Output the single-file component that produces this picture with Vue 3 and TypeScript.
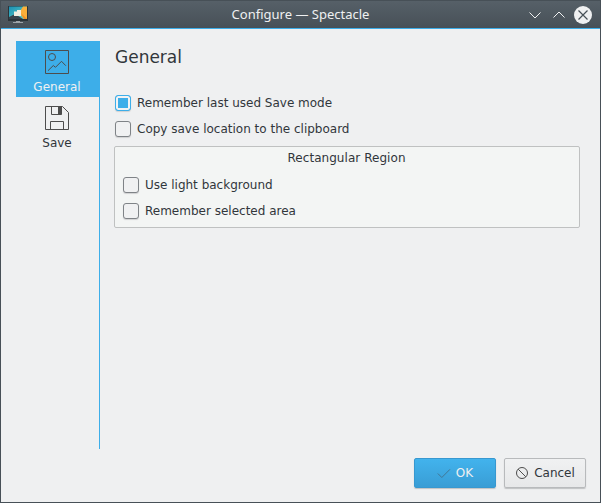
<script setup lang="ts">
import { ref } from 'vue'

interface Option {
  label: string
  checked: boolean
}

const page = ref('General')
const saving = ref<Option[]>([
  { label: 'Remember last used Save mode', checked: true },
  { label: 'Copy save location to the clipboard', checked: false },
])
const region = ref<Option[]>([
  { label: 'Use light background', checked: false },
  { label: 'Remember selected area', checked: false },
])
</script>

<template>
  <div class="window">
    <header class="titlebar">
      <svg class="app-icon" width="20" height="17" viewBox="0 0 20 17">
        <defs>
          <linearGradient id="screen" x1="0" y1="0" x2="1" y2="1">
            <stop offset="0" stop-color="#1a8fb5" />
            <stop offset="1" stop-color="#65d5c5" />
          </linearGradient>
        </defs>
        <path d="M0 0h20v15H0z" fill="#2b3439" />
        <path d="M1 .5h18V13H1z" fill="url(#screen)" />
        <path d="M15 .5h4V13h-3l-5-6z" fill="#fbb03b" />
        <path d="M1 13v-2l6-3 8 5z" fill="#39434b" />
        <path d="M13 7l6 6h-3z" fill="#f0902a" />
        <path d="M6 5.500h3V4h4v6H6z" fill="#f0eee2" />
        <path d="M8 15h4v1h3v1H5v-1h3z" fill="#9da4a9" />
      </svg>
      <span class="title">Configure — Spectacle</span>
      <div class="controls">
        <svg width="12" height="18" viewBox="0 0 12 18"><path d="M.5 6.500 6 12l5.500-5.500" /></svg>
        <svg width="12" height="18" viewBox="0 0 12 18"><path d="M.5 11.500 6 6l5.500 5.500" /></svg>
        <svg class="close" width="18" height="18" viewBox="0 0 18 18">
          <circle cx="9" cy="9" r="9" />
          <path d="m4.500 4.500 9 9m0-9-9 9" />
        </svg>
      </div>
    </header>

    <main class="body">
      <nav class="sidebar">
        <button class="page" :class="{ active: page === 'General' }" @click="page = 'General'">
          <svg width="24" height="24" viewBox="0 0 24 24">
            <path d="M.5.5h23v23H.5z" />
            <circle cx="7" cy="7" r="3.500" />
            <path d="m3 20.700 5.300-5.200 2.200 1.800 6-6 4.300 4.400" />
          </svg>
          <span>General</span>
        </button>
        <button class="page" :class="{ active: page === 'Save' }" @click="page = 'Save'">
          <svg width="24" height="24" viewBox="0 0 24 24">
            <path d="M.5.5h17l6 6v17H.5zM6.500.5v8h10v-8M5.500 23.500v-8h13v8" />
            <path class="solid" d="M13 1h3.500v7.500H13z" />
          </svg>
          <span>Save</span>
        </button>
      </nav>

      <section class="content">
        <h1>General</h1>
        <label v-for="o in saving" :key="o.label" class="option">
          <input v-model="o.checked" type="checkbox" /><span>{{ o.label }}</span>
        </label>
        <div class="group">
          <h2>Rectangular Region</h2>
          <label v-for="o in region" :key="o.label" class="option">
            <input v-model="o.checked" type="checkbox" /><span>{{ o.label }}</span>
          </label>
        </div>
      </section>
    </main>

    <footer class="actions">
      <button class="btn primary">
        <svg width="14" height="14" viewBox="0 0 14 14"><path d="m.8 7.500 4 4 8.200-8.200" /></svg>
        <span>OK</span>
      </button>
      <button class="btn">
        <svg width="14" height="14" viewBox="0 0 14 14">
          <circle cx="7" cy="7" r="5.500" />
          <path d="m3.200 3.200 7.600 7.600" />
        </svg>
        <span>Cancel</span>
      </button>
    </footer>
  </div>
</template>

<style>
body {
  background: #eff0f1;
}
</style>

<style scoped>
* {
  box-sizing: border-box;
}
.window {
  display: flex;
  flex-direction: column;
  width: 601px;
  height: 503px;
  border: 1px solid #475057;
  border-top: 0;
  background: #eff0f1;
  color: #31363b;
  font: 12px/16px "DejaVu Sans", sans-serif;
}
button {
  font: inherit;
  color: inherit;
}
svg {
  flex: none;
  fill: none;
  stroke: #4d4d4d;
}
.titlebar {
  display: grid;
  grid-template-columns: 92px 1fr 92px;
  align-items: center;
  height: 29px;
  flex: none;
  border-top: 1px solid #475057;
  border-bottom: 1px solid #3daee9;
  background: linear-gradient(#566068, #475057);
  color: #eff0f1;
}
.app-icon {
  margin-left: 7px;
  stroke: none;
}
.title {
  margin-bottom: 1px;
  text-align: center;
  font: 13px/16px "Noto Sans", sans-serif;
}
.controls {
  display: flex;
  align-items: center;
  justify-content: flex-end;
  gap: 12px;
  padding-right: 8px;
}
.controls svg {
  stroke: #eff0f1;
}
.controls .close {
  margin-left: -3px;
  fill: #eff0f1;
  stroke: none;
}
.close path {
  stroke: #475057;
  stroke-width: 1.200;
}
.body {
  display: flex;
  flex: none;
  height: 408px;
  margin: 12px 20px 0 15px;
}
.sidebar {
  width: 84px;
  border-right: 1px solid #3daee9;
}
.page {
  display: flex;
  flex-direction: column;
  align-items: center;
  gap: 5px;
  width: 84px;
  height: 56px;
  padding: 9px 2px 0 0;
  border: 0;
  background: none;
}
.page.active {
  background: #3daee9;
}
.page.active span {
  color: #eff0f1;
}
.solid {
  fill: #4d4d4d;
  stroke: none;
}
.content {
  flex: 1;
  padding: 4px 0 0 14px;
}
h1 {
  margin: 0 0 33px 1px;
  font-size: 17px;
  font-weight: 400;
  line-height: 24px;
}
.option {
  display: flex;
  align-items: center;
  gap: 6px;
  height: 26px;
  margin-left: 1px;
}
h1 + .option {
  margin-top: -12px;
}
input {
  appearance: none;
  width: 16px;
  height: 16px;
  margin: 0 0 1px;
  border: 1px solid #7f8387;
  border-radius: 3px;
  background: #f0f1f2;
  box-shadow: 0 1px 1px #d0d1d2;
}
input:checked {
  border-color: #3daee9;
  background: #3daee9;
  box-shadow: inset 0 0 0 2px #f2f3f4, 0 1px 1px #d0d1d2;
}
.group {
  height: 82px;
  margin-top: 4px;
  padding: 3px 7px 1px;
  border: 1px solid #bfc1c1;
  border-radius: 2px;
  background: #f3f5f4;
}
h2 {
  margin: 0 1px 5px 0;
  text-align: center;
  font-size: 12px;
  font-weight: 400;
  line-height: 17px;
  letter-spacing: 0.050px;
}
.actions {
  display: flex;
  justify-content: flex-end;
  gap: 8px;
  margin: 9px 14px 0 0;
}
.btn {
  display: flex;
  align-items: center;
  justify-content: center;
  gap: 5px;
  width: 82px;
  height: 30px;
  padding: 0;
  border: 1px solid #b8babc;
  border-radius: 2px;
  background: linear-gradient(#f0f1f2, #e7e8e9);
  box-shadow: 0 1px 1px #bfc1c2;
}
.primary {
  border-color: #3798d0;
  background: linear-gradient(#42b3ed, #399dd5);
  color: #eff0f1;
}
.primary svg {
  stroke: #427795;
}
</style>
